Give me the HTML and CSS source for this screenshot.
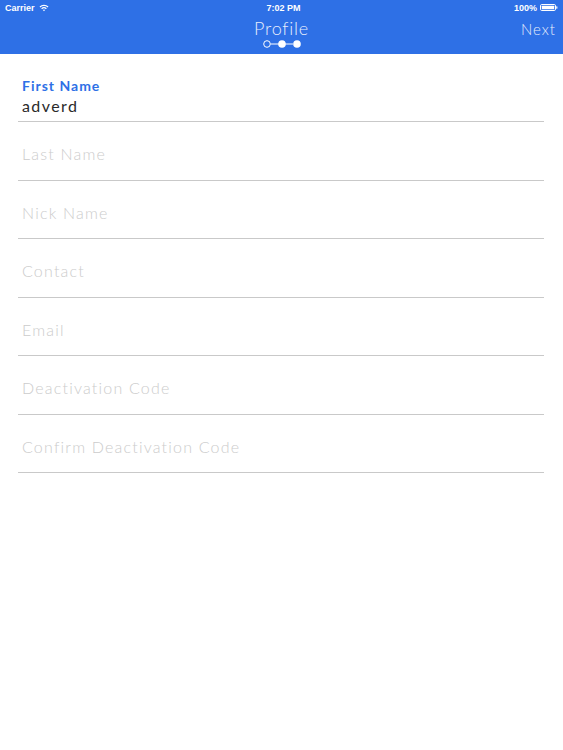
FILE: index.html
```html
<!DOCTYPE html>
<html>
<head>
<meta charset="utf-8">
<link rel="stylesheet" href="styles.css">
</head>
<body>
<header class="topbar">
  <div class="status">
    <div class="status-left">
      <span>Carrier</span>
      <svg class="wifi" width="10" height="8" viewBox="0 0 10 8">
        <path d="M0.5 2.6 A6.5 6.5 0 0 1 9.5 2.6 L8.6 3.5 A5.2 5.2 0 0 0 1.4 3.5 Z" fill="#fff"/>
        <path d="M2.2 4.3 A4 4 0 0 1 7.8 4.3 L6.9 5.2 A2.7 2.7 0 0 0 3.1 5.2 Z" fill="#fff"/>
        <path d="M3.9 6 A1.6 1.6 0 0 1 6.1 6 L5 7.3 Z" fill="#fff"/>
      </svg>
    </div>
    <div class="status-time">7:02 PM</div>
    <div class="status-right">
      <span>100%</span>
      <svg class="battery" width="18" height="7" viewBox="0 0 18 7">
        <rect x="0.5" y="0.5" width="15" height="6" rx="1.3" fill="none" stroke="#fff" stroke-width="1"/>
        <rect x="1.8" y="1.8" width="12.4" height="3.4" rx="0.5" fill="#fff"/>
        <rect x="16.2" y="2.3" width="1.2" height="2.4" rx="0.5" fill="#fff"/>
      </svg>
    </div>
  </div>
  <div class="navrow">
    <div class="nav-side"></div>
    <div class="nav-center">
      <div class="title">Profile</div>
      <svg class="steps" width="40" height="10" viewBox="0 0 40 10">
        <line x1="8.5" y1="5" x2="31" y2="5" stroke="#fff" stroke-width="1"/>
        <circle cx="5" cy="5" r="3.3" fill="#2e70e6" stroke="#fff" stroke-width="1"/>
        <circle cx="20" cy="5" r="3.8" fill="#fff"/>
        <circle cx="35" cy="5" r="3.8" fill="#fff"/>
      </svg>
    </div>
    <div class="nav-side nav-right">Next</div>
  </div>
</header>
<main class="form">
  <div class="field field-active">
    <div class="label">First Name</div>
    <div class="value">adverd</div>
  </div>
  <div class="field"><div class="placeholder">Last Name</div></div>
  <div class="field"><div class="placeholder">Nick Name</div></div>
  <div class="field"><div class="placeholder">Contact</div></div>
  <div class="field"><div class="placeholder">Email</div></div>
  <div class="field"><div class="placeholder">Deactivation Code</div></div>
  <div class="field"><div class="placeholder">Confirm Deactivation Code</div></div>
</main>
</body>
</html>
```
FILE: styles.css
```css
html, body {
  margin: 0;
  padding: 0;
  background: #fff;
}
body {
  font-family: "Lato", "Noto Sans", sans-serif;
}
.topbar {
  height: 54px;
  background: #2e70e6;
  color: #fff;
  display: flex;
  flex-direction: column;
}
.status {
  height: 15px;
  display: flex;
  align-items: center;
  justify-content: space-between;
  padding: 0 5px;
  font-family: "Liberation Sans", sans-serif;
  font-size: 9px;
  font-weight: bold;
}
.status-left, .status-right {
  display: flex;
  align-items: center;
  gap: 4px;
  width: 60px;
}
.status-right {
  justify-content: flex-end;
  gap: 3px;
}
.status-time {
  flex: 1;
  text-align: center;
  padding-left: 4px;
}
.navrow {
  flex: 1;
  display: flex;
  align-items: flex-start;
}
.nav-side {
  width: 80px;
  box-sizing: border-box;
}
.nav-right {
  text-align: right;
  padding-right: 7px;
  padding-top: 5px;
  font-size: 15px;
  font-weight: 300;
  letter-spacing: 1px;
  color: #e6edfc;
}
.nav-center {
  flex: 1;
  display: flex;
  flex-direction: column;
  align-items: center;
  padding-top: 2px;
}
.title {
  font-size: 18px;
  font-weight: 300;
  letter-spacing: 0.8px;
  line-height: 22px;
  color: #e6edfc;
}
.steps {
  display: block;
  margin-top: 0;
}
.form {
  margin: 0 19px 0 18px;
}
.field {
  border-bottom: 1px solid #c9c9c9;
  padding: 22px 4px 15.5px;
}
.field-active {
  padding: 24px 4px 5px;
}
.label {
  font-size: 14px;
  line-height: 16px;
  font-weight: bold;
  color: #2e70e6;
  letter-spacing: 1px;
}
.value {
  margin-top: 2px;
  font-size: 16px;
  line-height: 20px;
  color: #2a2a2a;
  letter-spacing: 1.4px;
}
.placeholder {
  font-size: 16px;
  line-height: 20px;
  color: #cccccc;
  letter-spacing: 1.2px;
  font-weight: 300;
}
```
